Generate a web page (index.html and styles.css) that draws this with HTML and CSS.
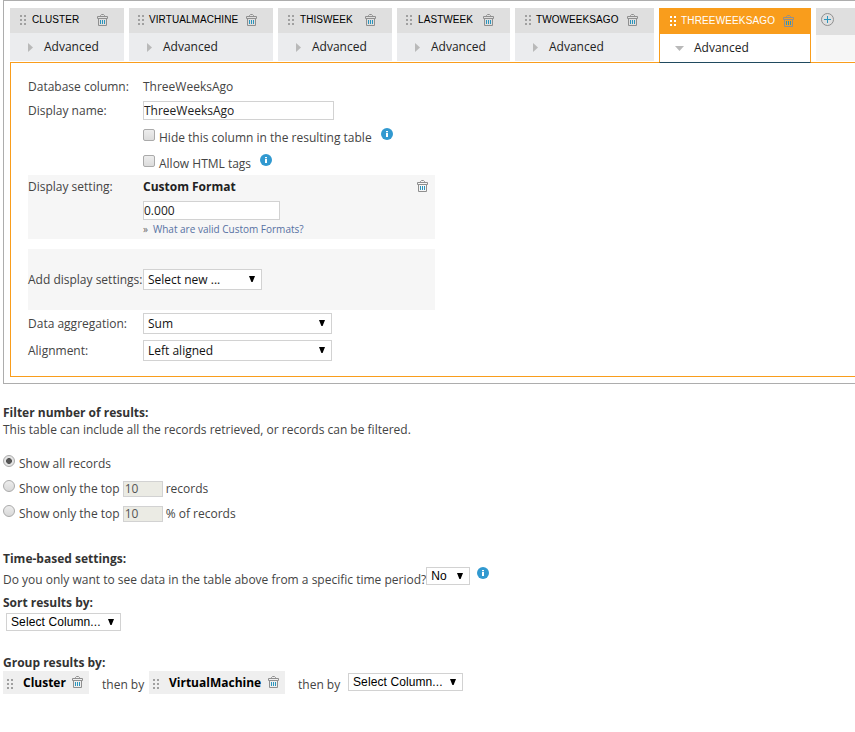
FILE: index.html
```
<!DOCTYPE html>
<html lang="en">
<head>
  <meta charset="UTF-8">
  <title>Edit Custom Table</title>
  <link rel="stylesheet" href="styles.css">
</head>
<body>

  <!-- shared icons -->
  <svg class="sprite" width="0" height="0">
    <symbol id="trash" viewBox="0 0 11 12">
      <path d="M3.5 2V1.5L4.5 .5H6.5L7.5 1.5V2M.5 2.5H10.5V4.5H.5ZM1.5 4.5V11.5H9.5V4.5" fill="none" stroke="#8f8f8f"/>
      <path d="M3.5 6V10M5.5 6V10M7.5 6V10" stroke="#2b95bd"/>
    </symbol>
    <symbol id="grip" viewBox="0 0 6 10">
      <path d="M0 0h2v2H0zM4 0h2v2H4zM0 4h2v2H0zM4 4h2v2H4zM0 8h2v2H0zM4 8h2v2H4z" fill="currentColor"/>
    </symbol>
    <symbol id="info" viewBox="0 0 12 12">
      <circle cx="6" cy="6" r="6" fill="#3199d0"/>
      <path d="M5 3h2v1.3H5zM5 5h2v4H5z" fill="#fff"/>
    </symbol>
    <symbol id="arrow" viewBox="0 0 6 6">
      <path d="M0 0H6L3.6 6H2.4Z" fill="#000"/>
    </symbol>
    <symbol id="right" viewBox="0 0 5 9">
      <path d="M0 0L5 4.5L0 9Z" fill="#b9b9b9"/>
    </symbol>
  </svg>

  <div class="frame">
    <div class="tabs">
      <div class="tab cluster">
        <div class="tab-head"><svg class="grip"><use href="#grip"/></svg><span>CLUSTER</span><svg class="trash"><use href="#trash"/></svg></div>
        <div class="tab-body"><svg class="right"><use href="#right"/></svg>Advanced</div>
      </div>
      <div class="tab machine">
        <div class="tab-head"><svg class="grip"><use href="#grip"/></svg><span>VIRTUALMACHINE</span><svg class="trash"><use href="#trash"/></svg></div>
        <div class="tab-body"><svg class="right"><use href="#right"/></svg>Advanced</div>
      </div>
      <div class="tab this-week">
        <div class="tab-head"><svg class="grip"><use href="#grip"/></svg><span>THISWEEK</span><svg class="trash"><use href="#trash"/></svg></div>
        <div class="tab-body"><svg class="right"><use href="#right"/></svg>Advanced</div>
      </div>
      <div class="tab last-week">
        <div class="tab-head"><svg class="grip"><use href="#grip"/></svg><span>LASTWEEK</span><svg class="trash"><use href="#trash"/></svg></div>
        <div class="tab-body"><svg class="right"><use href="#right"/></svg>Advanced</div>
      </div>
      <div class="tab two-weeks">
        <div class="tab-head"><svg class="grip"><use href="#grip"/></svg><span>TWOWEEKSAGO</span><svg class="trash"><use href="#trash"/></svg></div>
        <div class="tab-body"><svg class="right"><use href="#right"/></svg>Advanced</div>
      </div>
      <div class="tab three-weeks active">
        <div class="tab-head"><svg class="grip"><use href="#grip"/></svg><span>THREEWEEKSAGO</span><svg class="trash"><use href="#trash"/></svg></div>
        <div class="tab-body"><svg class="down" viewBox="0 0 9 5"><path d="M0 0H9L4.5 5Z" fill="#b9b9b9"/></svg>Advanced</div>
      </div>
      <div class="tab add">
        <div class="tab-head">
          <svg class="plus" viewBox="0 0 13 13"><circle cx="6.5" cy="6.5" r="6" fill="none" stroke="#8f8f8f"/><path d="M6.5 3V10M3 6.5H10" stroke="#2b95bd"/></svg>
        </div>
        <div class="tab-body"></div>
      </div>
    </div>

    <div class="panel">
      <div class="row"><label>Database column:</label><span>ThreeWeeksAgo</span></div>
      <div class="row"><label>Display name:</label><input class="text name" type="text" value="ThreeWeeksAgo"></div>
      <div class="row check"><i class="box"></i><span>Hide this column in the resulting table</span><svg class="info"><use href="#info"/></svg></div>
      <div class="row check"><i class="box"></i><span>Allow HTML tags</span><svg class="info"><use href="#info"/></svg></div>
      <div class="setting">
        <label>Display setting:</label>
        <div class="format">
          <b>Custom Format</b>
          <input class="text" type="text" value="0.000">
          <a class="help"><span>»</span>What are valid Custom Formats?</a>
        </div>
        <svg class="trash"><use href="#trash"/></svg>
      </div>
      <div class="setting new">
        <label>Add display settings:</label>
        <div class="select short">Select new ...<svg><use href="#arrow"/></svg></div>
      </div>
      <div class="row tall"><label>Data aggregation:</label><div class="select">Sum<svg><use href="#arrow"/></svg></div></div>
      <div class="row tall"><label>Alignment:</label><div class="select">Left aligned<svg><use href="#arrow"/></svg></div></div>
    </div>
  </div>

  <div class="section filter">
    <h3>Filter number of results:</h3>
    <p>This table can include all the records retrieved, or records can be filtered.</p>
    <div class="option"><i class="radio on"></i><span>Show all records</span></div>
    <div class="option"><i class="radio"></i><span>Show only the top</span><input class="text num" type="text" value="10" disabled><span>records</span></div>
    <div class="option"><i class="radio"></i><span>Show only the top</span><input class="text num" type="text" value="10" disabled><span>% of records</span></div>
  </div>

  <div class="section time">
    <h3>Time-based settings:</h3>
    <div class="question"><span>Do you only want to see data in the table above from a specific time period?</span><div class="select plain no">No<svg><use href="#arrow"/></svg></div><svg class="info"><use href="#info"/></svg></div>
  </div>

  <div class="section sort">
    <h3>Sort results by:</h3>
    <div class="select plain">Select Column...<svg><use href="#arrow"/></svg></div>
  </div>

  <div class="section group">
    <h3>Group results by:</h3>
    <div class="chips">
      <div class="chip"><svg class="grip"><use href="#grip"/></svg><b>Cluster</b><svg class="trash"><use href="#trash"/></svg></div>
      <span class="then">then by</span>
      <div class="chip wide"><svg class="grip"><use href="#grip"/></svg><b>VirtualMachine</b><svg class="trash"><use href="#trash"/></svg></div>
      <span class="then">then by</span>
      <div class="select plain">Select Column...<svg><use href="#arrow"/></svg></div>
    </div>
  </div>

</body>
</html>
```
FILE: styles.css
```
* {
  box-sizing: border-box;
}
body {
  margin: 0;
  height: 732px;
  overflow: hidden;
  background: #fff;
  font-family: "Open Sans", sans-serif;
  font-size: 12px;
  line-height: 18px;
  color: #444;
  white-space: nowrap;
}
svg {
  display: block;
  flex: none;
}
.sprite {
  position: absolute;
}
.grip {
  width: 6px;
  height: 10px;
  color: #a0a0a0;
}
.trash {
  width: 11px;
  height: 12px;
}
.info {
  width: 12px;
  height: 12px;
}
.right {
  width: 5px;
  height: 9px;
}
.down {
  width: 9px;
  height: 5px;
}

/* column tabs */
.frame {
  width: 870px;
  height: 384px;
  margin-left: 3px;
  border: 1px solid #adadad;
  padding: 7px 0 0 6px;
}
.tabs {
  display: flex;
  gap: 5px;
  height: 54px;
}
.tab {
  flex: none;
  width: 114px;
  height: 53px;
}
.tab.machine { width: 144px; }
.tab.last-week { width: 113px; }
.tab.two-weeks { width: 139px; }
.tab.three-weeks { width: 152px; }
.tab-head {
  display: flex;
  height: 25px;
  padding: 7px 16px 0 10px;
  background: #dfdfdf;
  font-family: "Liberation Sans", Arial, sans-serif;
  font-size: 10px;
  line-height: 10px;
  letter-spacing: 0.08px;
  color: #000;
}
.tab-head span {
  margin-left: 6px;
}
.machine .tab-head,
.last-week .tab-head {
  padding-left: 9px;
}
.machine span,
.two-weeks span,
.three-weeks span {
  margin-left: 5px;
}
.tab-head .trash {
  margin: -1px 0 0 auto;
}
.tab-body {
  display: flex;
  align-items: center;
  gap: 11px;
  height: 28px;
  padding-left: 18px;
  background: #ebecee;
  color: #222;
}
.active {
  height: 55px;
  position: relative;
  border: 1px solid #f99d1c;
  border-top: 0;
  border-bottom: 1px solid #204a5e;
  background: #fff;
}
.active .tab-head {
  height: 26px;
  padding-top: 8px;
  background: #f99d1c;
  letter-spacing: 0.15px;
  color: #fff;
}
.active .grip {
  color: #fff;
}
.active .tab-body {
  gap: 10px;
  padding-left: 15px;
  background: #fff;
}
.tab.add {
  width: 60px;
}
.add .tab-head {
  height: 27px;
  padding: 5px;
}
.add .tab-body {
  height: 26px;
  background: #f6f6f6;
}
.plus {
  width: 13px;
  height: 13px;
}

/* column settings */
.panel {
  height: 315px;
  border: 1px solid #f99d1c;
  padding: 12px 0 0 17px;
}
.row {
  display: flex;
  align-items: center;
  height: 24px;
}
.row.tall {
  height: 27px;
}
label {
  flex: none;
  width: 115px;
}
.text {
  width: 137px;
  height: 19px;
  margin: 0;
  padding: 0;
  border: 1px solid #d2d2d2;
  background: #fff;
  font-family: inherit;
  font-size: 12px;
  color: #222;
}
.text.name {
  width: 191px;
  margin-top: -1px;
}
.row.check {
  height: 26px;
  padding-left: 115px;
  align-items: flex-start;
}
.box {
  width: 12px;
  height: 12px;
  margin: 6px 4px 0 0;
  border: 1px solid #aaa;
  border-radius: 2px;
  background: linear-gradient(#ededed, #dcdcdc);
}
.check span {
  margin-top: 6px;
}
.check .info {
  margin: 5px 0 0 9px;
}
.setting {
  display: flex;
  width: 407px;
  height: 64px;
  padding-top: 3px;
  background: #f6f6f6;
}
.format {
  display: flex;
  flex-direction: column;
}
.format b {
  color: #222;
}
.format .text {
  margin-top: 5px;
}
.help {
  font-size: 10px;
  color: #5671a2;
}
.help span {
  margin-right: 5px;
  color: #666;
}
.setting .trash {
  margin: 2px 7px 0 auto;
}
.setting.new {
  height: 61px;
  margin-top: 10px;
  padding: 0;
  align-items: center;
}
.select {
  display: flex;
  justify-content: space-between;
  align-items: center;
  width: 189px;
  height: 21px;
  padding: 0 6px 0 4px;
  border: 1px solid #d2d2d2;
  background: #fff;
  color: #111;
}
.select svg {
  width: 6px;
  height: 6px;
  margin-top: -2px;
}
.select.short {
  width: 119px;
}
.select.plain {
  flex: none;
  width: 115px;
  height: 18px;
  font-family: "Liberation Sans", Arial, sans-serif;
  letter-spacing: 0.1px;
  color: #000;
}
.select.plain svg {
  margin-top: -1px;
}

/* table wide settings */
.section {
  margin-left: 3px;
}
h3 {
  margin: 0;
  font-size: 12px;
  line-height: 18px;
  color: #333;
}
.filter {
  margin-top: 20px;
}
.filter h3,
.group h3 {
  margin-bottom: -1px;
}
p {
  margin: 0 0 12px;
}
.option {
  display: flex;
  align-items: center;
  height: 25px;
}
.radio {
  width: 12px;
  height: 12px;
  margin: -5px 4px 0 0;
  border: 1px solid #aaa;
  border-radius: 50%;
  background: linear-gradient(#ededed, #d8d8d8);
}
.radio.on {
  background: radial-gradient(circle, #555 0 2.6px, #e4e4e4 3.2px);
}
.text.num {
  width: 40px;
  height: 16px;
  margin: 0 3px;
  padding-left: 1px;
  background: #ebebe4;
  color: #555;
}
.time {
  margin-top: 24px;
}
.question {
  display: flex;
  height: 26px;
  line-height: 24px;
}
.question .select.no {
  width: 44px;
  margin-top: -1px;
}
.question .info {
  margin: -1px 0 0 7px;
}
.sort .select {
  margin: 1px 0 0 3px;
}
.group {
  margin-top: 23px;
}
.chips {
  display: flex;
  height: 23px;
}
.chip {
  display: flex;
  width: 86px;
  padding: 0 6px 0 4px;
  background: #efefef;
  line-height: 23px;
  color: #000;
}
.chip.wide {
  width: 136px;
}
.chip .grip {
  margin: 8px 10px 0 0;
}
.chip .trash {
  margin: 5px 0 0 auto;
}
.then {
  width: 60px;
  padding-left: 13px;
  line-height: 27px;
}
.chips .select {
  margin: 2px 0 0 3px;
}
```
